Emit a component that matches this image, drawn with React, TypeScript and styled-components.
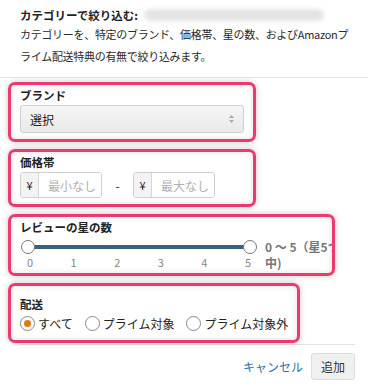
import React, { useState } from "react";
import styled, { createGlobalStyle } from "styled-components";

const GlobalStyle = createGlobalStyle`
  body {
    margin: 0;
    background: #fff;
    font-family: "Noto Sans CJK JP", "Noto Sans", sans-serif;
    color: #222;
  }
`;

const Panel = styled.div`
  width: 368px;
  height: 388px;
  padding-top: 7px;
  box-sizing: border-box;
  overflow: hidden;
`;

const Header = styled.div`
  padding: 0 20px;
`;

const Title = styled.div`
  display: flex;
  align-items: center;
  font-size: 11.5px;
  line-height: 16px;
  font-weight: bold;
  white-space: nowrap;
`;

const Blur = styled.span`
  display: inline-block;
  width: 180px;
  height: 12px;
  margin-left: 6px;
  background: #e4e4e4;
  border-radius: 6px;
  filter: blur(2px);
`;

const Desc = styled.div`
  font-size: 11px;
  letter-spacing: -0.3px;
  line-height: 22px;
  color: #2a2a2a;
  white-space: nowrap;
`;

const Divider = styled.div`
  margin-top: 10px;
  border-top: 1px solid #e3e3e3;
`;

const Sections = styled.div`
  display: flex;
  flex-direction: column;
  gap: 7px;
  padding: 4px 8px 0;
`;

const Section = styled.div<{ $w: number; $h: number }>`
  width: ${(p) => p.$w}px;
  height: ${(p) => p.$h}px;
  box-sizing: border-box;
  border: 3px solid #ec3a6e;
  border-radius: 7px;
  padding: 2px 9px 0;
  box-shadow: 0 0 6px rgba(0, 0, 0, 0.22), inset 0 0 6px rgba(0, 0, 0, 0.12);
  overflow: hidden;
`;

const Label = styled.div<{ $top?: number }>`
  font-size: 11.5px;
  font-weight: bold;
  line-height: 17px;
  margin: ${(p) => p.$top ?? 0}px 0 1px;
`;

const Select = styled.div`
  display: flex;
  align-items: center;
  justify-content: space-between;
  height: 28px;
  box-sizing: border-box;
  padding: 0 9px;
  border: 1px solid #cfcfcf;
  border-radius: 3px;
  background: linear-gradient(#f6f6f6, #e9e9e9);
  font-size: 12px;
  color: #222;
`;

const PriceRow = styled.div`
  display: flex;
  align-items: center;
`;

const InputGroup = styled.div`
  display: flex;
  width: 82px;
  height: 26px;
  box-sizing: border-box;
  border: 1px solid #cfcfcf;
  border-radius: 3px;
  overflow: hidden;
  font-size: 12px;
`;

const Prefix = styled.div`
  width: 17px;
  display: flex;
  align-items: center;
  justify-content: center;
  background: #f3f3f3;
  border-right: 1px solid #d6d6d6;
  font-size: 11px;
`;

const Field = styled.div`
  flex: 1;
  display: flex;
  align-items: center;
  padding-left: 9px;
  color: #b0b0b0;
  background: #fff;
`;

const Dash = styled.div`
  width: 31px;
  text-align: center;
  font-size: 12px;
`;

const SliderRow = styled.div`
  display: flex;
  align-items: flex-start;
  margin-top: 4px;
`;

const SliderCol = styled.div`
  flex-shrink: 0;
  width: 238px;
`;

const Track = styled.div`
  position: relative;
  height: 14px;
  margin: 0 1px;
`;

const Line = styled.div`
  position: absolute;
  left: 7px;
  right: 7px;
  top: 5px;
  height: 4px;
  background: #3b607e;
`;

const Knob = styled.div<{ $side: "left" | "right" }>`
  position: absolute;
  top: 0;
  ${(p) => p.$side}: 0;
  width: 14px;
  height: 14px;
  box-sizing: border-box;
  border: 1px solid #777;
  border-radius: 50%;
  background: #fff;
`;

const Ticks = styled.div`
  display: flex;
  justify-content: space-between;
  padding: 0 7px 0 7px;
  font-size: 11px;
  color: #888;
  line-height: 16px;
`;

const RangeText = styled.div`
  flex-shrink: 0;
  margin-left: 7px;
  margin-top: -1px;
  font-size: 12px;
  font-weight: bold;
  color: #777;
  line-height: 16px;
  white-space: nowrap;
`;

const RadioRow = styled.div`
  display: flex;
  align-items: center;
  gap: 12px;
  font-size: 12px;
  margin-top: 2px;
`;

const RadioItem = styled.label`
  display: flex;
  align-items: center;
  gap: 3px;
  cursor: pointer;
  white-space: nowrap;
`;

const RadioDot = styled.span<{ $on: boolean }>`
  width: 15px;
  height: 15px;
  box-sizing: border-box;
  border-radius: 50%;
  border: 1px solid #888;
  background: #fff;
  display: flex;
  align-items: center;
  justify-content: center;
  &::after {
    content: "";
    width: 7px;
    height: 7px;
    border-radius: 50%;
    background: ${(p) => (p.$on ? "#e47911" : "transparent")};
  }
`;

const Footer = styled.div`
  margin: 1px 13px 0 20px;
  border-top: 1px solid #e3e3e3;
  display: flex;
  justify-content: flex-end;
  align-items: center;
  gap: 8px;
  padding-top: 8px;
`;

const CancelLink = styled.a`
  color: #2a72a8;
  font-size: 12px;
  text-decoration: none;
`;

const AddButton = styled.button`
  width: 44px;
  height: 27px;
  border: 1px solid #ddd;
  border-radius: 3px;
  background: #f0f0f0;
  font-family: inherit;
  font-size: 12px;
  color: #333;
  padding: 0;
`;

export default function App() {
  const [ship, setShip] = useState(0);
  const options = ["すべて", "プライム対象", "プライム対象外"];

  return (
    <Panel>
      <GlobalStyle />
      <Header>
        <Title>
          カテゴリーで絞り込む:
          <Blur />
        </Title>
        <Desc>
          カテゴリーを、特定のブランド、価格帯、星の数、およびAmazonプ
          <br />
          ライム配送特典の有無で絞り込みます。
        </Desc>
      </Header>
      <Divider />
      <Sections>
        <Section $w={248} $h={60}>
          <Label>ブランド</Label>
          <Select>
            選択
            <svg width="5" height="8" viewBox="0 0 5 8">
              <path d="M2.5 0 L5 3 H0 Z M2.5 8 L5 5 H0 Z" fill="#aaa" />
            </svg>
          </Select>
        </Section>
        <Section $w={248} $h={58}>
          <Label>価格帯</Label>
          <PriceRow>
            <InputGroup>
              <Prefix>¥</Prefix>
              <Field>最小なし</Field>
            </InputGroup>
            <Dash>-</Dash>
            <InputGroup>
              <Prefix>¥</Prefix>
              <Field>最大なし</Field>
            </InputGroup>
          </PriceRow>
        </Section>
        <Section $w={327} $h={62}>
          <Label>レビューの星の数</Label>
          <SliderRow>
            <SliderCol>
              <Track>
                <Line />
                <Knob $side="left" />
                <Knob $side="right" />
              </Track>
              <Ticks>
                {[0, 1, 2, 3, 4, 5].map((n) => (
                  <span key={n}>{n}</span>
                ))}
              </Ticks>
            </SliderCol>
            <RangeText>
              0 ～ 5（星5つ
              <br />
              中)
            </RangeText>
          </SliderRow>
        </Section>
        <Section $w={292} $h={60}>
          <Label $top={8}>配送</Label>
          <RadioRow>
            {options.map((o, i) => (
              <RadioItem key={o} onClick={() => setShip(i)}>
                <RadioDot $on={ship === i} />
                {o}
              </RadioItem>
            ))}
          </RadioRow>
        </Section>
      </Sections>
      <Footer>
        <CancelLink href="#">キャンセル</CancelLink>
        <AddButton>追加</AddButton>
      </Footer>
    </Panel>
  );
}
